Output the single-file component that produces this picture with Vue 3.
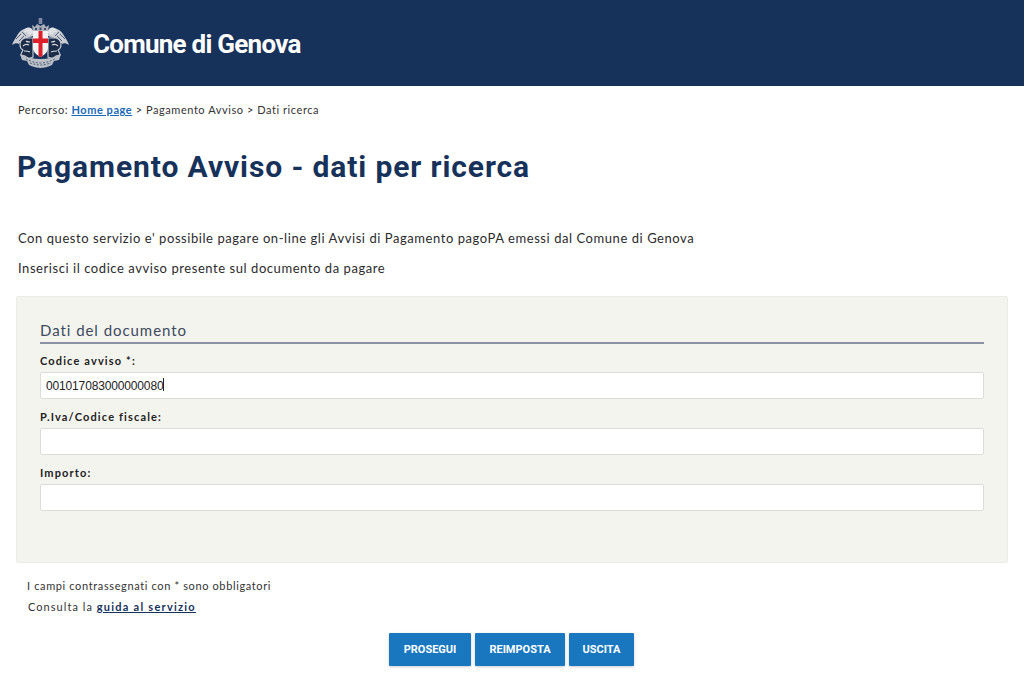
<script setup>
import { ref } from 'vue'

const codice = ref('001017083000000080')
const piva = ref('')
const importo = ref('')
const bottoni = [
  { label: 'PROSEGUI', cls: 'b1' },
  { label: 'REIMPOSTA', cls: 'b2' },
  { label: 'USCITA', cls: 'b3' }
]
</script>

<template>
  <div class="page">
    <header class="top">
      <svg class="stemma" width="59" height="50" viewBox="0 0 59 50">
        <defs>
          <g id="grifo">
            <!-- wing -->
            <path d="M22 12C16 9 10 11 7 16 5 20 2 23 1 27c3-2 5-2 7-1 1-2 3-4 5-5l9-3z" fill="#c9ccd3" />
            <path d="M5 21l5-5M8 23l5-5M11 14l4 4" stroke="#51607a" stroke-width="1" fill="none" />
            <!-- body -->
            <path d="M14 20c-3 1-5 4-5 7 0 2 1 4 3 5-1 2-2 3-2 5l4 1 3 3 5-2V20z" fill="#1b2c49" stroke="#c2c6ce" stroke-width="1.2" />
            <path d="M12 28c2-2 4-2 6-1M13 33c2 0 4 0 6 1M15 23c1 1 2 1 4 1" stroke="#d4d7dc" stroke-width="1.2" fill="none" />
            <!-- head -->
            <path d="M14 11c2-2 5-2 7 0l1 4-4 2-2-3-3 0z" fill="#dfe1e5" />
          </g>
        </defs>
        <!-- crown -->
        <path d="M27.7 0h3.6v6h-3.6z" fill="#7f8aa0" />
        <path d="M22 13l-1-6 3 2 2-3 3.500 2 3.500-2 2 3 3-2-1 6z" fill="#aab0bb" />
        <path d="M24 10h2v2h-2zM28.500 9.500h2v2.500h-2zM33 10h2v2h-2z" fill="#3b4a66" />
        <use href="#grifo" />
        <use href="#grifo" transform="matrix(-1 0 0 1 59 0)" />
        <!-- base -->
        <path d="M9 36c6 3 13 5 20.500 5S44 39 50 36l-2 6-5 1-2 4c-4 2-8 3-11.500 3S22 49 18 47l-2-4-5-1z" fill="#b9bec7" />
        <path d="M15 41c4 2 9 4 14.500 4S40 43 44 41M19 45c3 1 7 2 10.500 2s7.500-1 10.500-2" stroke="#56627a" stroke-width="1" stroke-dasharray="2 1.500" fill="none" />
        <!-- shield -->
        <path d="M22 13h15v17c0 4-3.500 7-7.500 9-4-2-7.500-5-7.500-9z" fill="#f2f2f2" />
        <path d="M27.500 13h4v7.500H37V25h-5.500v13.300l-2 .7-2-.7V25H22v-4.500h5.500z" fill="#dc1f2b" />
      </svg>
      <span class="ente">Comune di Genova</span>
    </header>

    <nav class="percorso">Percorso: <a href="#" class="home">Home page</a> &gt; Pagamento Avviso &gt; Dati ricerca</nav>

    <h1>Pagamento Avviso - dati per ricerca</h1>

    <p class="intro primo">Con questo servizio e' possibile pagare on-line gli Avvisi di Pagamento pagoPA emessi dal Comune di Genova</p>
    <p class="intro secondo">Inserisci il codice avviso presente sul documento da pagare</p>

    <form class="box" @submit.prevent>
      <h2>Dati del documento</h2>
      <label class="campo">
        <span>Codice avviso *:</span>
        <input v-model="codice" type="text" />
        <i class="cursore"></i>
      </label>
      <label class="campo">
        <span>P.Iva/Codice fiscale:</span>
        <input v-model="piva" type="text" />
      </label>
      <label class="campo">
        <span>Importo:</span>
        <input v-model="importo" type="text" />
      </label>
    </form>

    <p class="nota">I campi contrassegnati con * sono obbligatori</p>
    <p class="guida">Consulta la <a href="#">guida al servizio</a></p>

    <div class="azioni">
      <button v-for="b in bottoni" :key="b.label" type="button" :class="b.cls">{{ b.label }}</button>
    </div>
  </div>
</template>

<style>
html, body { margin: 0; background: #fff; }
</style>

<style scoped>
.page {
  height: 675px;
  overflow: hidden;
  font-family: "Lato", "Noto Sans", sans-serif;
  color: #2b2b2b;
  box-sizing: border-box;
}

.top {
  height: 86px;
  background: #17325a;
  display: flex;
  align-items: center;
  padding-left: 11px;
}

.stemma { margin-top: -1px; }

.ente {
  margin: 1px 0 0 23px;
  color: #fff;
  font-family: "Roboto", sans-serif;
  font-size: 26px;
  font-weight: 700;
  letter-spacing: -0.75px;
  line-height: 1;
}

.percorso {
  margin: 16px 0 0 18px;
  font-size: 11px;
  line-height: 15px;
  letter-spacing: 0.56px;
  color: #333;
}

.home {
  color: #1a69b8;
  font-weight: 700;
}

h1 {
  margin: 32px 0 0 17px;
  font-family: "Roboto", sans-serif;
  font-size: 30px;
  line-height: 36px;
  font-weight: 700;
  letter-spacing: 0.9px;
  color: #17325a;
}

.intro {
  margin: 0 0 0 18px;
  font-size: 13px;
  line-height: 18px;
  letter-spacing: 0.56px;
}

.primo { margin-top: 44px; }
.secondo { margin-top: 12px; }

.box {
  margin: 19px 16px 0;
  height: 267px;
  box-sizing: border-box;
  background: #f4f4ef;
  border: 1px solid #ebebe7;
  border-radius: 2px;
  padding: 24px 23px 0;
}

h2 {
  margin: 0 0 10px;
  padding-bottom: 2px;
  font-size: 15px;
  line-height: 19px;
  font-weight: 400;
  letter-spacing: 0.95px;
  color: #3d4a60;
  border-bottom: 2px solid #8a92a3;
}

.campo {
  display: block;
  position: relative;
  margin-bottom: 11px;
}

.campo span {
  display: block;
  font-size: 11px;
  line-height: 13px;
  font-weight: 700;
  letter-spacing: 1.15px;
  color: #222;
  margin-bottom: 5px;
}

.campo input {
  display: block;
  width: 100%;
  height: 27px;
  box-sizing: border-box;
  border: 1px solid #dcdcd8;
  border-radius: 2px;
  background: #fff;
  padding: 0 5px;
  font-family: "Liberation Sans", Arial, sans-serif;
  font-size: 12px;
  letter-spacing: -0.15px;
  color: #222;
  outline: none;
}

/* caret stays visible in the reference */
.cursore {
  position: absolute;
  left: 123px;
  top: 24px;
  width: 1px;
  height: 13px;
  background: #222;
}

.nota, .guida {
  font-size: 11px;
  line-height: 14px;
  letter-spacing: 0.63px;
  color: #333;
}

.nota { margin: 16px 0 0 27px; }
.guida { margin: 7px 0 0 28px; letter-spacing: 1.05px; }

.guida a {
  color: #17325a;
  font-weight: 700;
  letter-spacing: 1.25px;
}

.azioni {
  display: flex;
  justify-content: center;
  gap: 4px;
  margin-top: 19px;
  padding-right: 1px;
}

.azioni button {
  height: 33px;
  border: 0;
  border-radius: 1px;
  background: #1877bf;
  color: #fff;
  font-family: "Roboto", sans-serif;
  font-size: 11px;
  font-weight: 700;
  padding: 0;
  box-shadow: 0 1px 3px rgba(0, 0, 0, .2);
}

.b1 { width: 82px; }
.b2 { width: 90px; }
.b3 { width: 65px; }
</style>
